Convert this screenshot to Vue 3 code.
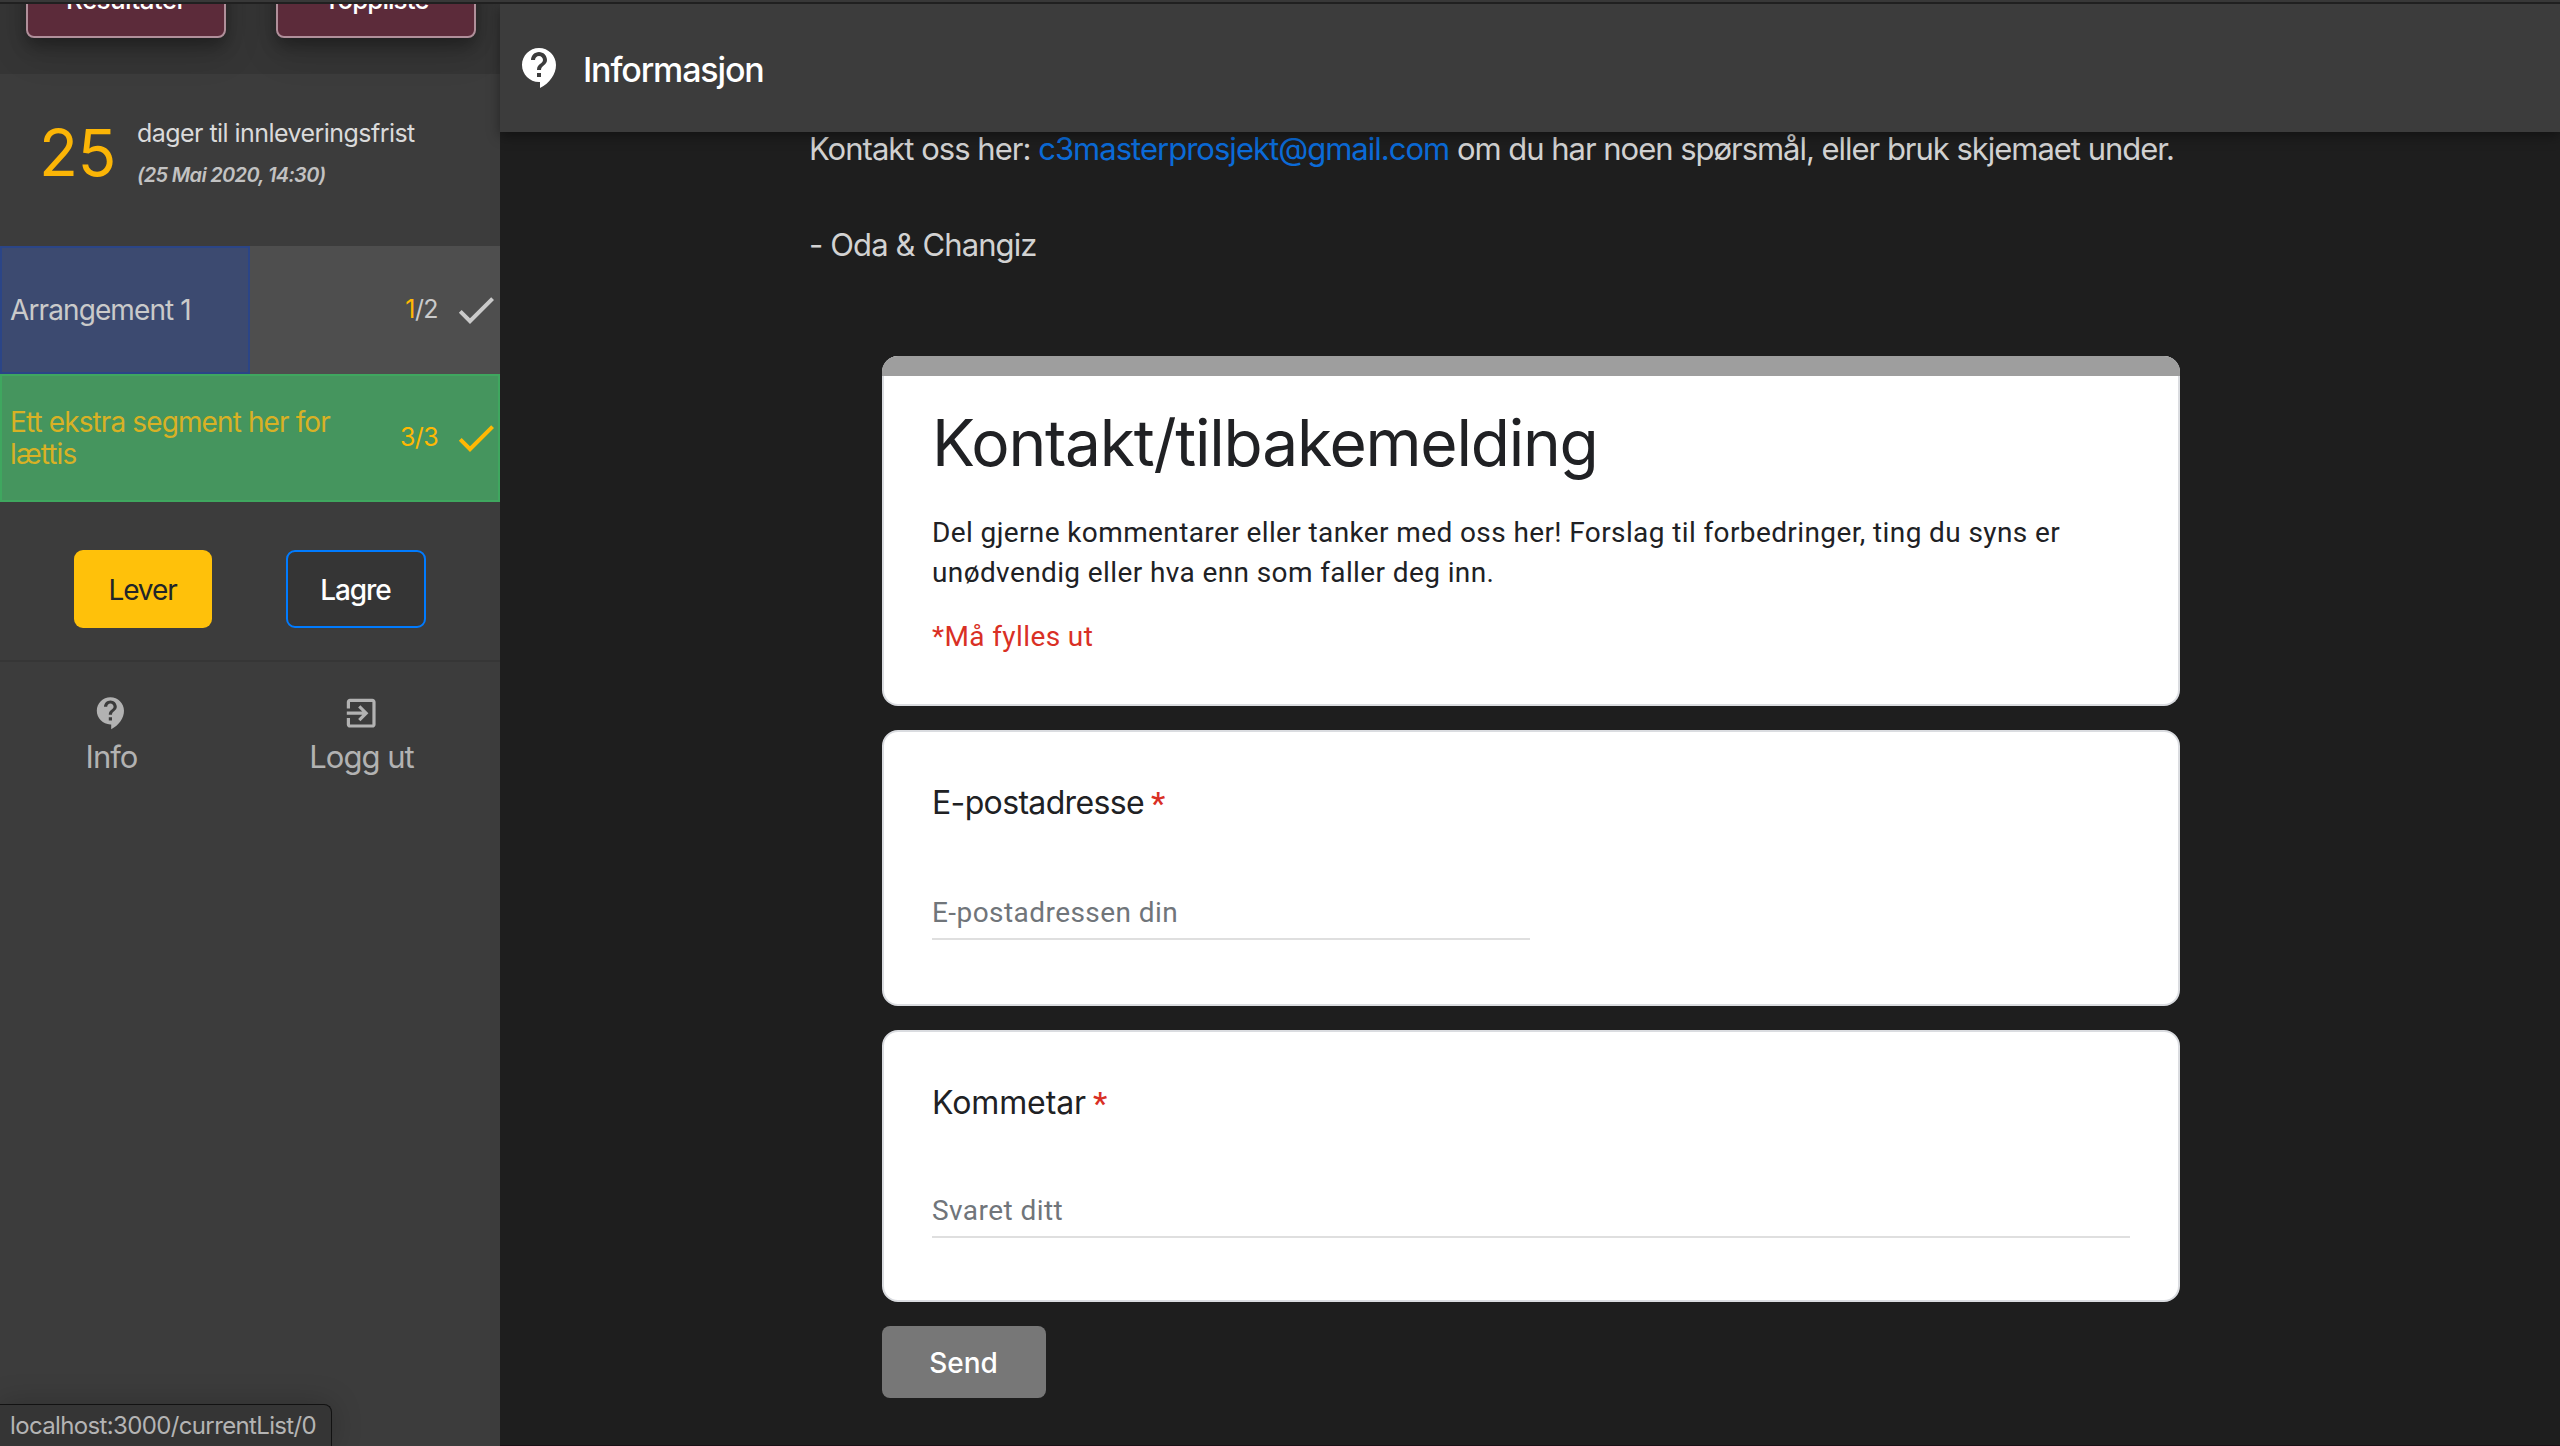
<script setup>
const segments = [
  { title: 'Arrangement 1', done: 1, total: 2 },
  { title: 'Ett ekstra segment her for lættis', done: 3, total: 3 },
]
const isComplete = (s) => s.done === s.total
</script>

<template>
  <div class="window">
    <div class="chrome-edge"></div>
    <div class="app">
      <aside class="sidebar">
        <div class="top-actions">
          <button class="btn-wine">Resultater</button>
          <button class="btn-wine toppliste">Toppliste</button>
        </div>

        <div class="countdown">
          <span class="days">25</span>
          <div class="countdown-text">
            <div class="countdown-label">dager til innleveringsfrist</div>
            <div class="countdown-date">(25 Mai 2020, 14:30)</div>
          </div>
        </div>

        <div
          v-for="s in segments"
          :key="s.title"
          class="segment"
          :class="{ complete: isComplete(s) }"
        >
          <div class="progress" :style="{ width: (s.done / s.total) * 100 + '%' }"></div>
          <span class="segment-title">{{ s.title }}</span>
          <span class="segment-count"><span class="done">{{ s.done }}</span>/{{ s.total }}</span>
          <svg class="check" viewBox="0 0 24 24"><path d="M9 16.17L4.83 12l-1.42 1.41L9 19 21 7l-1.41-1.41z" /></svg>
        </div>

        <div class="submit-row">
          <button class="btn lever">Lever</button>
          <button class="btn lagre">Lagre</button>
        </div>

        <nav class="footer-nav">
          <a class="nav-item">
            <svg viewBox="0 0 24 24"><path d="M11.5 2C6.81 2 3 5.81 3 10.5S6.81 19 11.5 19h.5v3c4.86-2.34 8-7 8-11.5C20 5.81 16.19 2 11.5 2zm1 14.5h-2v-2h2v2zm0-3.5h-2c0-3.25 3-3 3-5 0-1.1-.9-2-2-2s-2 .9-2 2h-2c0-2.21 1.79-4 4-4s4 1.79 4 4c0 2.5-3 2.75-3 5z" /></svg>
            <span>Info</span>
          </a>
          <a class="nav-item">
            <svg viewBox="0 0 24 24"><path d="M10.09 15.59L11.5 17l5-5-5-5-1.41 1.41L12.67 11H3v2h9.67l-2.58 2.59zM19 3H5c-1.11 0-2 .9-2 2v4h2V5h14v14H5v-4H3v4c0 1.1.89 2 2 2h14c1.1 0 2-.9 2-2V5c0-1.1-.9-2-2-2z" /></svg>
            <span>Logg ut</span>
          </a>
        </nav>
      </aside>

      <main class="main">
        <header class="page-header">
          <svg viewBox="0 0 24 24"><path d="M11.5 2C6.81 2 3 5.81 3 10.5S6.81 19 11.5 19h.5v3c4.86-2.34 8-7 8-11.5C20 5.81 16.19 2 11.5 2zm1 14.5h-2v-2h2v2zm0-3.5h-2c0-3.25 3-3 3-5 0-1.1-.9-2-2-2s-2 .9-2 2h-2c0-2.21 1.79-4 4-4s4 1.79 4 4c0 2.5-3 2.75-3 5z" /></svg>
          <h1>Informasjon</h1>
        </header>

        <p class="contact">
          Kontakt oss her: <a class="mail">c3masterprosjekt@gmail.com</a>
          <span class="contact-rest"> om du har noen spørsmål, eller bruk skjemaet under.</span>
          <br /><br />
          <span class="signature">- Oda &amp; Changiz</span>
        </p>

        <form class="form">
          <section class="card intro">
            <h2>Kontakt/tilbakemelding</h2>
            <p class="desc">Del gjerne kommentarer eller tanker med oss her! Forslag til forbedringer, ting du syns er unødvendig eller hva enn som faller deg inn.</p>
            <p class="required">*Må fylles ut</p>
          </section>

          <section class="card email">
            <div class="label"><span class="label-text">E-postadresse</span><span class="star">*</span></div>
            <div class="field">E-postadressen din</div>
          </section>

          <section class="card comment">
            <div class="label"><span class="label-text">Kommetar</span><span class="star">*</span></div>
            <div class="field">Svaret ditt</div>
          </section>

          <button type="button" class="send">Send</button>
        </form>
      </main>
    </div>

    <div class="status">localhost:3000/currentList/0</div>
  </div>
</template>

<style>
body {
  background: #1e1e1e;
}
</style>

<style scoped>
.window {
  position: relative;
  box-sizing: border-box;
  width: 2560px;
  height: 1446px;
  overflow: hidden;
  display: flex;
  flex-direction: column;
  background: #1e1e1e;
  font-family: Inter, "Liberation Sans", sans-serif;
}
.window * {
  box-sizing: border-box;
}
button {
  margin: 0;
  padding: 0;
  border: 0;
  font-family: inherit;
}
.chrome-edge {
  flex: none;
  height: 4px;
  background: #383838;
  border-bottom: 2px solid #202020;
}
.app {
  flex: 1;
  min-height: 0;
  display: flex;
  overflow: hidden;
}

/* Sidebar */
.sidebar {
  flex: none;
  width: 500px;
  background: #3c3c3c;
}
.top-actions {
  height: 70px;
  padding: 0 24px 36px 26px;
  display: flex;
  justify-content: space-between;
  align-items: flex-end;
  background: #353535;
}
.btn-wine {
  flex: none;
  width: 200px;
  height: 75px;
  padding-bottom: 2px;
  border: 2px solid #b08f9a;
  border-radius: 8px;
  background: #5c2b3a;
  color: #fff;
  font-size: 26px;
  font-weight: 500;
  letter-spacing: -0.6px;
  box-shadow: 0 8px 16px rgba(0, 0, 0, 0.3), 0 14px 36px rgba(0, 0, 0, 0.16);
}
.toppliste {
  letter-spacing: -0.95px;
}
.countdown {
  height: 172px;
  padding: 39px 0 0 39px;
  display: flex;
}
.days {
  width: 98px;
  font-size: 64px;
  line-height: 80px;
  letter-spacing: -0.5px;
  color: #fbb506;
}
.countdown-label {
  font-size: 25px;
  line-height: 40px;
  letter-spacing: -0.55px;
  color: #dadada;
}
.countdown-date {
  font-size: 20px;
  font-weight: 600;
  font-style: italic;
  line-height: 45px;
  letter-spacing: -0.68px;
  color: #c2c2c2;
}
.segment {
  position: relative;
  height: 128px;
  padding-left: 10px;
  display: flex;
  align-items: center;
  background: #4e4e4e;
  color: #cacaca;
}
.progress {
  position: absolute;
  top: 0;
  left: 0;
  bottom: 0;
  border: 2px solid #2b4587;
  background: #3c4a70;
}
.complete .progress {
  border-color: #3fa75f;
  background: #45955e;
}
.segment-title {
  position: relative;
  width: 350px;
  margin-right: auto;
  font-size: 28px;
  line-height: 32px;
  letter-spacing: -0.89px;
}
.complete .segment-title {
  color: #d8b125;
}
.segment-count {
  position: relative;
  margin-right: 14px;
  padding-bottom: 2px;
  font-size: 25px;
  letter-spacing: -0.6px;
}
.done,
.complete .segment-count {
  color: #ffb803;
}
.check {
  position: relative;
  width: 48px;
  height: 48px;
  fill: #cacaca;
}
.complete .check {
  fill: #ffb803;
}
.submit-row {
  height: 160px;
  padding: 48px 74px 0;
  display: flex;
  justify-content: space-between;
  border-bottom: 2px solid #363636;
}
.btn {
  height: 78px;
  padding-top: 2px;
  padding-right: 1px;
  border-radius: 9px;
  font-size: 28px;
  letter-spacing: -1.1px;
}
.lever {
  width: 138px;
  background: #ffc10a;
  color: #212529;
}
.lagre {
  width: 140px;
  border: 2px solid #007bff;
  background: #353535;
  color: #fff;
  font-weight: 500;
}
.footer-nav {
  display: flex;
  padding-top: 32px;
  color: #b2b2b2;
}
.nav-item {
  width: 250px;
  padding-right: 27px;
  display: flex;
  flex-direction: column;
  align-items: center;
  font-size: 31px;
  line-height: 38px;
  letter-spacing: -1px;
}
.nav-item svg {
  width: 38.4px;
  height: 38.4px;
  margin-bottom: 6px;
  fill: #b2b2b2;
}

/* Main column */
.main {
  flex: 1;
  display: flex;
  flex-direction: column;
  border-bottom: 1px solid #1a1016;
}
.page-header {
  position: relative;
  z-index: 1;
  flex: none;
  height: 128px;
  padding-left: 16px;
  display: flex;
  align-items: center;
  background: #3c3c3c;
  box-shadow: 0 4px 12px rgba(0, 0, 0, 0.4);
}
.page-header svg {
  width: 48px;
  height: 48px;
  fill: #fff;
}
h1 {
  margin: 2px 0 0 19px;
  font-size: 34px;
  font-weight: 500;
  letter-spacing: -1.14px;
  color: #fff;
}
.contact {
  margin: -7px 0 0 309px;
  font-size: 31px;
  line-height: 48px;
  letter-spacing: -0.98px;
  white-space: nowrap;
  color: #d2d2d2;
}
.mail {
  color: #0b6bd8;
}
.contact-rest {
  letter-spacing: -1.03px;
}
.signature {
  letter-spacing: -0.88px;
}
.form {
  width: 1298px;
  margin: 87px 0 0 382px;
  display: flex;
  flex-direction: column;
  gap: 24px;
}
.card {
  border: 2px solid #dadce0;
  border-radius: 16px;
  padding: 47px 48px 0;
  background: #fff;
  color: #202124;
}
.intro {
  position: relative;
  height: 350px;
  border-top: 0;
}
/* Theme-coloured strip covering the card's own border */
.intro::before {
  content: "";
  position: absolute;
  top: 0;
  left: -2px;
  right: -2px;
  height: 20px;
  border-radius: 16px 16px 0 0;
  background: #9e9e9e;
}
h2 {
  margin: 0;
  font-size: 64px;
  font-weight: 400;
  line-height: 80px;
  letter-spacing: -1.21px;
}
.desc,
.required {
  margin: 30px 0 0;
  font: 28px/40px Roboto, "Liberation Sans", sans-serif;
  letter-spacing: 0.39px;
}
.required {
  margin-top: 24px;
  color: #d93025;
}
.email {
  height: 276px;
}
.comment {
  height: 272px;
}
.label {
  display: flex;
  gap: 7px;
  line-height: 48px;
  font-size: 32px;
}
.email .label-text {
  letter-spacing: -0.65px;
}
.comment .label-text {
  letter-spacing: -0.1px;
}
.star {
  font-family: Roboto, "Liberation Sans", sans-serif;
  font-weight: 500;
  color: #d93025;
}
.field {
  height: 47px;
  border-bottom: 2px solid #dfdfdf;
  font: 28px/40px Roboto, "Liberation Sans", sans-serif;
  letter-spacing: 0.44px;
  color: #70757a;
}
.email .field {
  width: 598px;
  margin-top: 66px;
}
.comment .field {
  margin-top: 64px;
}
.send {
  width: 164px;
  height: 72px;
  padding: 1px 1px 0 0;
  border-radius: 8px;
  background: #777;
  color: #fff;
  font-size: 28px;
  font-weight: 500;
}

/* Link preview bubble in the lower left corner */
.status {
  position: absolute;
  left: 0;
  bottom: 0;
  z-index: 2;
  width: 332px;
  height: 42px;
  padding-left: 10px;
  border: 1px solid #121212;
  border-width: 1px 1px 0 0;
  border-radius: 0 8px 0 0;
  background: #353535;
  box-shadow: 0 0 30px rgba(0, 0, 0, 0.22);
  font-size: 24px;
  line-height: 41px;
  letter-spacing: -0.64px;
  color: #b4b4b4;
}
</style>
